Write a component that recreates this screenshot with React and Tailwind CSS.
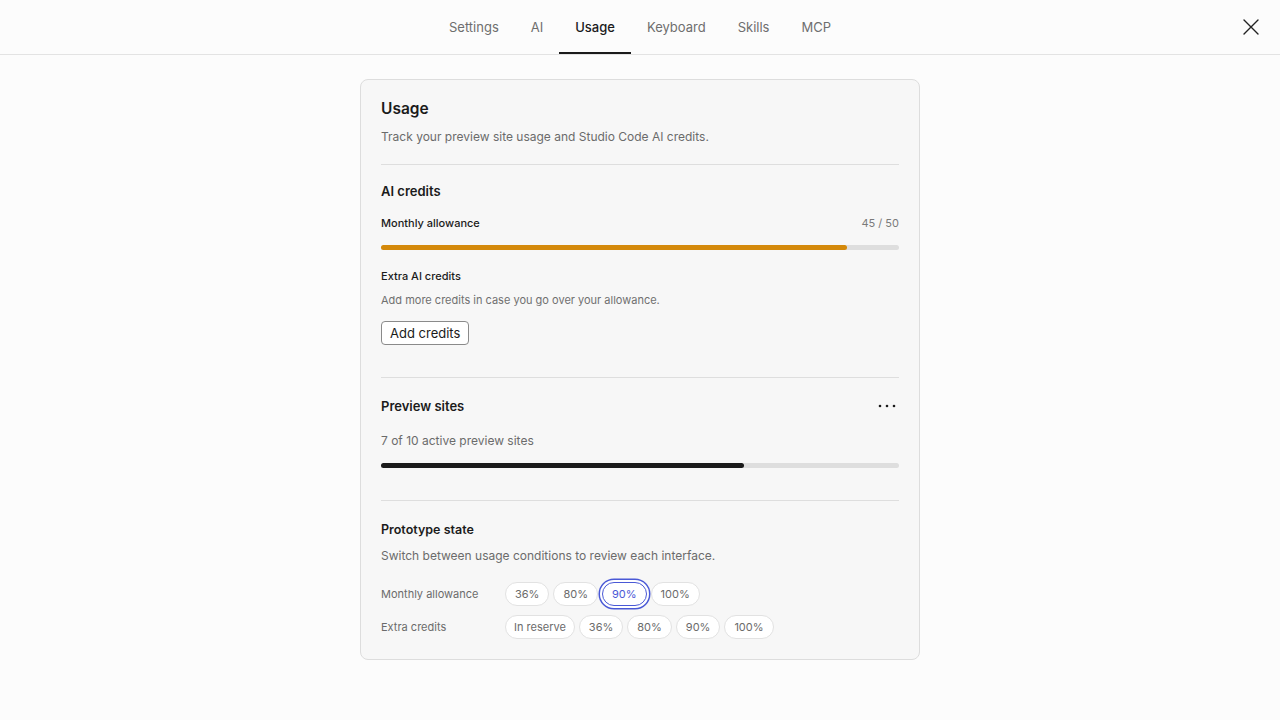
import React from "react";

const tabs = ["Settings", "AI", "Usage", "Keyboard", "Skills", "MCP"];

function Pill({ children, active, wide }) {
  const pad = wide ? "px-2" : "px-[9px]";
  return (
    <button
      className={
        active
          ? `h-6 rounded-full bg-white ${pad} text-[11px] text-[#4a59d6] border border-[#4a59d6] shadow-[0_0_0_2px_#ffffff,0_0_0_3.5px_#4a59d6]`
          : `h-6 rounded-full bg-white ${pad} text-[11px] text-[#6b6b6b] border border-[#e2e2e2]`
      }
    >
      {children}
    </button>
  );
}

function Bar({ value, color }) {
  return (
    <div className="h-[5px] w-full rounded-full bg-[#dedede]">
      <div className={`h-[5px] rounded-full ${color}`} style={{ width: `${value}%` }} />
    </div>
  );
}

export default function App() {
  return (
    <div
      className="min-h-[720px] bg-[#fcfcfc] text-[#1b1b1b]"
      style={{ fontFamily: "Inter, 'Noto Sans', sans-serif" }}
    >
      <header className="relative flex h-[55px] items-stretch justify-center border-b border-[#e3e3e3]">
        <nav className="flex items-stretch">
          {tabs.map((t) => (
            <div
              key={t}
              className={
                t === "Usage"
                  ? "flex items-center border-b-2 border-[#1b1b1b] px-4 pt-[4px] text-[13px] font-medium text-[#1b1b1b]"
                  : "flex items-center border-b-2 border-transparent px-4 pt-[4px] text-[13px] text-[#6e6e6e]"
              }
            >
              {t}
            </div>
          ))}
        </nav>
        <button className="absolute right-[20px] top-[18px] text-[#222]">
          <svg width="18" height="18" viewBox="0 0 18 18" fill="none" stroke="currentColor" strokeWidth="1.4" strokeLinecap="round">
            <path d="M2 2L16 16M16 2L2 16" />
          </svg>
        </button>
      </header>

      <main className="flex justify-center pt-[24px]">
        <section className="w-[560px] rounded-lg border border-[#dddddd] bg-[#f7f7f7] px-5 pb-[20px] pt-[19px]">
          <h1 className="text-[15.5px] font-semibold leading-5">Usage</h1>
          <p className="mt-[10px] text-[12px] leading-4 text-[#6b6b6b]">
            Track your preview site usage and Studio Code AI credits.
          </p>

          <div className="mt-[19px] border-t border-[#dedede]" />

          <h2 className="mt-[18px] text-[13px] font-semibold leading-4">AI credits</h2>
          <div className="mt-[16px] flex items-center justify-between text-[11px] leading-4">
            <span className="font-medium text-[#1b1b1b]">Monthly allowance</span>
            <span className="text-[#7a7a7a]">45 / 50</span>
          </div>
          <div className="mt-[14px]">
            <Bar value={90} color="bg-[#d4890b]" />
          </div>

          <h3 className="mt-[18px] text-[11px] font-medium leading-4">Extra AI credits</h3>
          <p className="mt-[8px] text-[11px] leading-4 text-[#707070]">
            Add more credits in case you go over your allowance.
          </p>
          <button className="mt-[13px] h-6 rounded-[4px] border border-[#8a8a8a] bg-white px-2 text-[13px] leading-none text-[#1b1b1b]">
            Add credits
          </button>

          <div className="mt-[32px] border-t border-[#dedede]" />

          <div className="mt-[20px] flex items-center justify-between">
            <h2 className="text-[13px] font-semibold leading-4">Preview sites</h2>
            <svg width="18" height="4" viewBox="0 0 18 4" className="mr-[3px] text-[#1b1b1b]">
              <circle cx="2" cy="2" r="1.3" fill="currentColor" />
              <circle cx="9" cy="2" r="1.3" fill="currentColor" />
              <circle cx="16" cy="2" r="1.3" fill="currentColor" />
            </svg>
          </div>
          <p className="mt-[19px] text-[12px] leading-4 text-[#6b6b6b]">7 of 10 active preview sites</p>
          <div className="mt-[14px]">
            <Bar value={70} color="bg-[#1b1b1b]" />
          </div>

          <div className="mt-[32px] border-t border-[#dedede]" />

          <h2 className="mt-[21px] text-[12.5px] font-semibold leading-4">Prototype state</h2>
          <p className="mt-[10px] text-[12px] leading-4 text-[#6b6b6b]">
            Switch between usage conditions to review each interface.
          </p>

          <div className="mt-[18px] grid grid-cols-[124px_1fr] items-center gap-y-[9px]">
            <span className="text-[11px] text-[#6b6b6b]">Monthly allowance</span>
            <div className="flex items-center gap-[4px]">
              <Pill>36%</Pill>
              <Pill>80%</Pill>
              <Pill active>90%</Pill>
              <Pill>100%</Pill>
            </div>
            <span className="text-[11px] text-[#6b6b6b]">Extra credits</span>
            <div className="flex items-center gap-[4px]">
              <Pill wide>In reserve</Pill>
              <Pill>36%</Pill>
              <Pill>80%</Pill>
              <Pill>90%</Pill>
              <Pill>100%</Pill>
            </div>
          </div>
        </section>
      </main>
    </div>
  );
}
